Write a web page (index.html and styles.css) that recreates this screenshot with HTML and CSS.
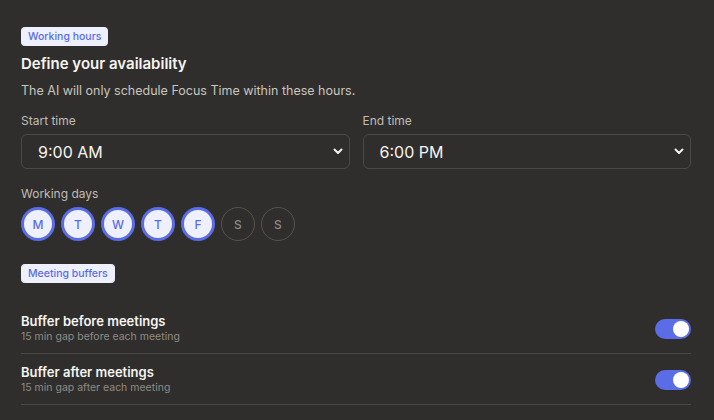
FILE: index.html
```html
<!DOCTYPE html>
<html lang="en">
<head>
  <meta charset="UTF-8">
  <meta name="viewport" content="width=device-width, initial-scale=1.0">
  <link rel="stylesheet" href="styles.css">
  <title>Working hours</title>
</head>
<body>
  <div class="container">
    <span class="badge">Working hours</span>
    <h2 class="title">Define your availability</h2>
    <p class="subtitle">The AI will only schedule Focus Time within these hours.</p>

    <div class="time-grid">
      <div class="field">
        <label class="label">Start time</label>
        <div class="select">
          <span>9:00 AM</span>
          <svg width="10" height="7" viewBox="0 0 10 7"><path d="M1.5 1.5 L5 5 L8.5 1.5" fill="none" stroke="#f2f0ec" stroke-width="2" stroke-linecap="round" stroke-linejoin="round"/></svg>
        </div>
      </div>
      <div class="field">
        <label class="label">End time</label>
        <div class="select">
          <span>6:00 PM</span>
          <svg width="10" height="7" viewBox="0 0 10 7"><path d="M1.5 1.5 L5 5 L8.5 1.5" fill="none" stroke="#f2f0ec" stroke-width="2" stroke-linecap="round" stroke-linejoin="round"/></svg>
        </div>
      </div>
    </div>

    <label class="label days-label">Working days</label>
    <div class="days">
      <span class="day active">M</span>
      <span class="day active">T</span>
      <span class="day active">W</span>
      <span class="day active">T</span>
      <span class="day active">F</span>
      <span class="day">S</span>
      <span class="day">S</span>
    </div>

    <span class="badge buffers-badge">Meeting buffers</span>

    <div class="rows">
      <div class="row">
        <div>
          <div class="row-title">Buffer before meetings</div>
          <div class="row-sub">15 min gap before each meeting</div>
        </div>
        <span class="toggle on"><span class="knob"></span></span>
      </div>
      <div class="row">
        <div>
          <div class="row-title">Buffer after meetings</div>
          <div class="row-sub">15 min gap after each meeting</div>
        </div>
        <span class="toggle on"><span class="knob"></span></span>
      </div>
    </div>
  </div>
</body>
</html>
```

FILE: styles.css
```css
body {
  margin: 0;
  padding: 0;
  background-color: #2f2e2c;
  font-family: 'Inter', 'Noto Sans', sans-serif;
  color: #f4f2ee;
}

.container {
  padding: 27px 23px 0 21px;
}

.badge {
  display: block;
  width: fit-content;
  padding: 3px 7px;
  font-size: 10.5px;
  line-height: 13px;
  font-weight: 500;
  border-radius: 4px;
  background-color: #eef0fe;
  color: #5a6de6;
}

.title {
  margin: 7px 0 0;
  font-size: 15px;
  line-height: 22px;
  font-weight: 600;
  color: #f6f4f0;
}

.subtitle {
  margin: 7px 0 0;
  font-size: 12.5px;
  line-height: 18px;
  color: #c9c5bd;
}

.time-grid {
  display: grid;
  grid-template-columns: 1fr 1fr;
  gap: 13px;
  margin-top: 13px;
}

.label {
  display: block;
  font-size: 12px;
  line-height: 16px;
  color: #c0bcb4;
  margin-bottom: 5px;
}

.select {
  display: flex;
  justify-content: space-between;
  align-items: center;
  height: 35px;
  box-sizing: border-box;
  padding: 0 6px 0 16px;
  border: 1px solid #4c4a47;
  border-radius: 6px;
  font-size: 16px;
  color: #f6f4f0;
}

.days-label {
  margin-top: 17px;
}

.days {
  display: flex;
  gap: 6px;
}

.day {
  display: flex;
  align-items: center;
  justify-content: center;
  width: 34px;
  height: 34px;
  box-sizing: border-box;
  border-radius: 50%;
  border: 1px solid #55534f;
  font-size: 12px;
  font-weight: 500;
  color: #8d8983;
}

.day.active {
  border: 3px solid #5a6de6;
  background-color: #eef0fe;
  color: #5a6de6;
}

.buffers-badge {
  margin-top: 23px;
}

.rows {
  margin-top: 20px;
}

.row {
  display: flex;
  justify-content: space-between;
  align-items: center;
  padding: 10px 0 9px;
  border-bottom: 1px solid #4a4845;
}

.row-title {
  font-size: 13px;
  line-height: 17px;
  font-weight: 600;
  color: #f6f4f0;
}

.row-sub {
  font-size: 10.5px;
  line-height: 14px;
  color: #8f8b84;
}

.toggle {
  display: flex;
  align-items: center;
  justify-content: flex-end;
  width: 36px;
  height: 20px;
  box-sizing: border-box;
  padding: 2px;
  border-radius: 10px;
  background-color: #5a6de6;
}

.knob {
  width: 16px;
  height: 16px;
  border-radius: 50%;
  background-color: #fff;
}
```
